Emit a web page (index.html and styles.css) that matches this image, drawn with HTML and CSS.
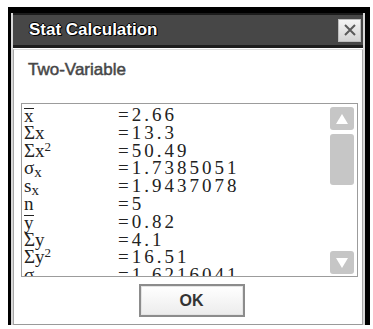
FILE: index.html
```html
<!DOCTYPE html>
<html>
<head>
    <title>Stat Calculation</title>
    <link rel="stylesheet" href="styles.css">
</head>
<body>
    <div class="screen">
        <div class="dialog">
            <div class="title-bar">
                <span class="title">Stat Calculation</span>
                <button class="close-btn" aria-label="Close">
                    <svg width="14" height="14" viewBox="0 0 14 14">
                        <path d="M2 2 L12 12 M12 2 L2 12" stroke="#5a5a5a" stroke-width="2" fill="none"/>
                    </svg>
                </button>
            </div>

            <div class="dialog-body">
                <p class="subtitle">Two-Variable</p>

                <div class="list-box">
                    <div class="rows">
                        <div class="row"><span class="label"><span class="bar">x</span></span><span class="value">=2.66</span></div>
                        <div class="row"><span class="label">&Sigma;x</span><span class="value">=13.3</span></div>
                        <div class="row"><span class="label">&Sigma;x<sup>2</sup></span><span class="value">=50.49</span></div>
                        <div class="row"><span class="label">&sigma;<sub>x</sub></span><span class="value">=1.7385051</span></div>
                        <div class="row"><span class="label">s<sub>x</sub></span><span class="value">=1.9437078</span></div>
                        <div class="row"><span class="label">n</span><span class="value">=5</span></div>
                        <div class="row"><span class="label"><span class="bar">y</span></span><span class="value">=0.82</span></div>
                        <div class="row"><span class="label">&Sigma;y</span><span class="value">=4.1</span></div>
                        <div class="row"><span class="label">&Sigma;y<sup>2</sup></span><span class="value">=16.51</span></div>
                        <div class="row"><span class="label">&sigma;<sub>y</sub></span><span class="value">=1.6216041</span></div>
                    </div>

                    <div class="scrollbar">
                        <div class="scroll-btn"><span class="tri-up"></span></div>
                        <div class="thumb"></div>
                        <div class="track"></div>
                        <div class="scroll-btn"><span class="tri-down"></span></div>
                    </div>
                </div>

                <div class="actions">
                    <button class="ok-btn">OK</button>
                </div>
            </div>
        </div>
    </div>
</body>
</html>
```

FILE: styles.css
```css
body {
    margin: 0;
    padding: 0;
    background-color: #ffffff;
}

.screen {
    margin: 7px 0 0 8px;
    width: 354px;
    border-top: 6px solid #000;
    border-left: 3px solid #000;
    border-right: 5px solid #000;
}

.dialog {
    border-left: 2px solid #d8d8d8;
    border-right: 2px solid #d8d8d8;
    height: 312px;
    display: flex;
    flex-direction: column;
}

.title-bar {
    height: 30px;
    background: #474747;
    border-top: 2px solid #1c1c1c;
    border-bottom: 3px solid #1e1e1e;
    display: flex;
    align-items: center;
    justify-content: space-between;
    padding: 0 2px 0 16px;
}

.title {
    font-family: "Liberation Sans", Arial, sans-serif;
    font-weight: bold;
    font-size: 17px;
    color: #fff;
    text-shadow: 1px 1px 0 #000, -1px 0 0 #000, 0 -1px 0 #000, 1px 0 0 #000;
}

.close-btn {
    width: 23px;
    height: 23px;
    padding: 0;
    border: 1px solid #bdbdbd;
    background: linear-gradient(#f4f4f4, #d4d4d4);
    display: flex;
    align-items: center;
    justify-content: center;
}

.dialog-body {
    flex: 1;
    border-left: 1px solid #a8a8a8;
    border-right: 1px solid #a8a8a8;
    border-bottom: 1px solid #9a9a9a;
    border-top: 1px solid #dcdcdc;
    margin-top: 1px;
    display: flex;
    flex-direction: column;
    padding: 0 4px 0 7px;
}

.subtitle {
    margin: 10px 0 0 0;
    padding-left: 7px;
    font-family: "Liberation Sans", Arial, sans-serif;
    font-size: 17px;
    line-height: 20px;
    color: #474747;
    -webkit-text-stroke: 0.5px #474747;
}

.list-box {
    margin-top: 23px;
    height: 172px;
    border: 1px solid #9c9c9c;
    display: flex;
    overflow: hidden;
}

.rows {
    flex: 1;
    padding: 2px 0 0 2px;
    overflow: hidden;
}

.row {
    display: flex;
    height: 17.8px;
    font-family: "Liberation Serif", "Times New Roman", serif;
    font-size: 19px;
    line-height: 17.8px;
    color: #222;
}

.label {
    width: 94px;
}

.label sub {
    font-size: 15px;
    vertical-align: -3px;
    line-height: 0;
}

.label sup {
    font-size: 13px;
    vertical-align: 6px;
    line-height: 0;
}

.bar {
    border-top: 1px solid #222;
    line-height: 13px;
    display: inline-block;
    margin-top: 2px;
}

.value {
    letter-spacing: 3px;
}

.scrollbar {
    width: 24px;
    padding: 3px 3px 2px 0;
    display: flex;
    flex-direction: column;
    gap: 4px;
}

.scroll-btn {
    height: 23px;
    background: #c6c6c6;
    border-radius: 3px;
    display: flex;
    align-items: center;
    justify-content: center;
}

.thumb {
    height: 51px;
    background: #c6c6c6;
    border-radius: 3px;
}

.track {
    flex: 1;
}

.tri-up {
    width: 0;
    height: 0;
    border-left: 6px solid transparent;
    border-right: 6px solid transparent;
    border-bottom: 10px solid #fff;
}

.tri-down {
    width: 0;
    height: 0;
    border-left: 6px solid transparent;
    border-right: 6px solid transparent;
    border-top: 10px solid #fff;
}

.actions {
    display: flex;
    justify-content: center;
    margin-top: 7px;
}

.ok-btn {
    width: 106px;
    height: 33px;
    margin-left: 4px;
    border: 2px solid #8c8c8c;
    box-shadow: inset 0 0 0 1px #e4e4e4;
    background: linear-gradient(#ffffff, #ececec);
    font-family: "Liberation Sans", Arial, sans-serif;
    font-weight: bold;
    font-size: 16px;
    color: #333;
}
```
